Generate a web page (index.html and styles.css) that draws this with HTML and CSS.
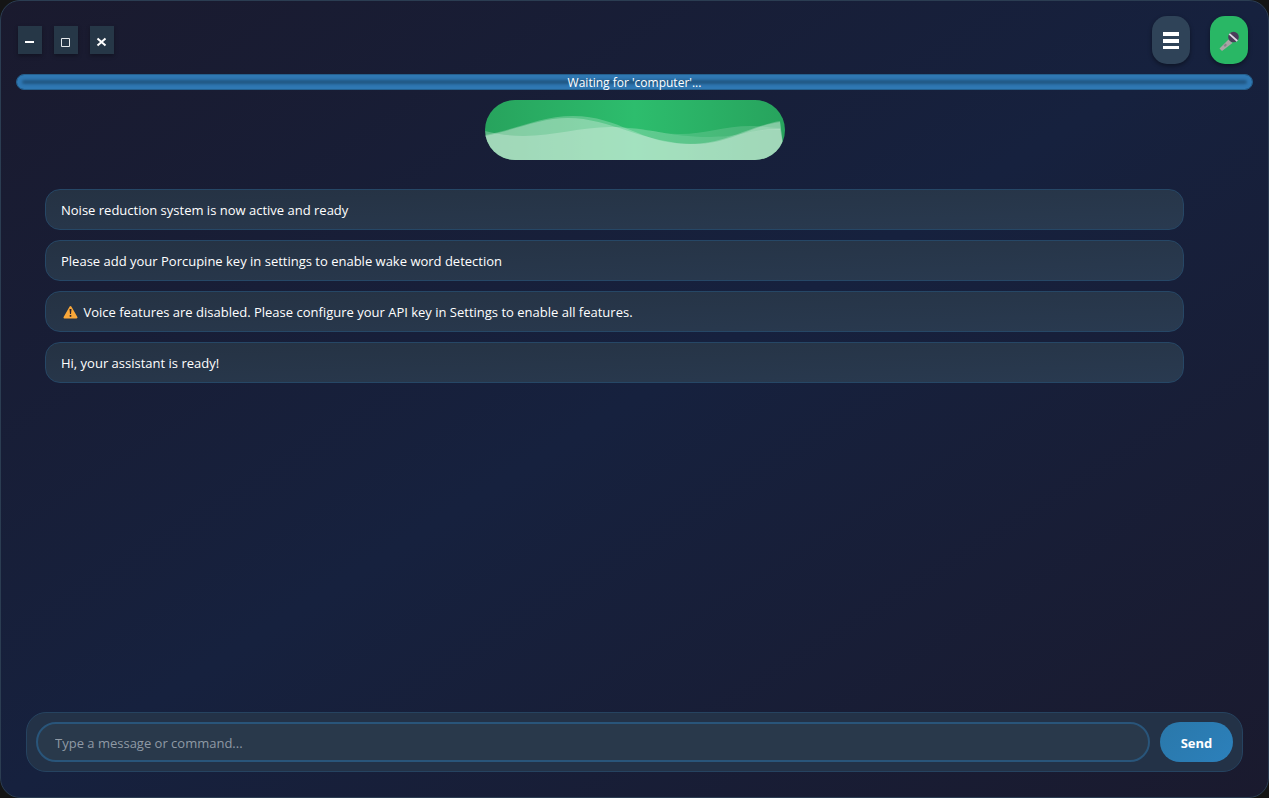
FILE: index.html
```html
<!DOCTYPE html>
<html lang="en">
<head>
<meta charset="utf-8">
<title>Voice Assistant</title>
<link rel="stylesheet" href="styles.css">
</head>
<body>
<div class="app">
  <header class="header">
    <div class="window-controls">
      <button class="window-button" type="button" aria-label="Minimize"><svg width="24" height="28" viewBox="0 0 24 28"><path d="M7 15h9v2H7z" fill="#fff"/></svg></button>
      <button class="window-button" type="button" aria-label="Maximize"><svg width="24" height="28" viewBox="0 0 24 28"><path d="M7.500 12.500h8v8h-8z" fill="none" stroke="#e4e8eb"/></svg></button>
      <button class="window-button" type="button" aria-label="Close"><svg width="24" height="28" viewBox="0 0 24 28"><path d="M7.500 12.500l8 7M15.500 12.500l-8 7" fill="none" stroke="#fff" stroke-width="2"/></svg></button>
    </div>
    <div class="actions">
      <button class="action menu" type="button" aria-label="Menu"><svg width="38" height="48" viewBox="0 0 38 48"><path d="M11 16h16v4H11zM11 23h16v4H11zM11 30h16v3H11z" fill="#fff"/></svg></button>
      <button class="action mic" type="button" aria-label="Microphone"><svg width="38" height="48" viewBox="0 0 38 48">
        <path d="M9.500 32.500l9-9 4 3.500-10.500 8z" fill="#a9a5a6"/>
        <path d="M13.500 29.500l2-2 1.500 1.500-2 2z" fill="#87838a"/>
        <circle cx="23.500" cy="21" r="5.300" fill="#4b3d5a"/>
        <path d="M19.300 17.800l8 7.200" stroke="#e0dae4" stroke-width="1.800"/>
      </svg></button>
    </div>
  </header>
  <div class="status" role="status">Waiting for 'computer'...</div>
  <div class="wave">
    <svg class="wave-art" viewBox="0 0 300 60" preserveAspectRatio="none" aria-hidden="true">
      <g fill="#fff">
        <path fill-opacity=".23" d="M0 35C30 30 55 16 88 16C135 16 155 44 205 44C240 44 265 26 295 21L298 45V60H0z"/>
        <path fill-opacity=".26" d="M0 36C30 30 55 18 83 18C125 18 160 44 210 44C245 44 265 26 295 22L298 45V60H0z"/>
        <path fill-opacity=".24" d="M0 31C50 44 85 27 125 27C160 27 185 37 225 37C255 37 270 28 295 29L298 45V60H0z"/>
        <path fill-opacity=".14" d="M130 27C155 27 170 34 195 34C220 34 240 26 265 26C280 26 285 28 295 28V30C270 28 255 37 225 37C185 37 160 27 130 27z"/>
      </g>
    </svg>
  </div>
  <main class="chat">
    <p class="message">Noise reduction system is now active and ready</p>
    <p class="message">Please add your Porcupine key in settings to enable wake word detection</p>
    <p class="message"><svg class="warning" width="19" height="14" viewBox="0 0 19 14" role="img" aria-label="Warning"><path d="M9.500 2l6 10.500h-12z" fill="#f9a83a" stroke="#f9a83a" stroke-width="2" stroke-linejoin="round"/><path d="M8.500 4h2l-.5 5h-1zM8.700 10h1.600v1.700H8.700z" fill="#2b2430"/></svg> Voice features are disabled. Please configure your API key in Settings to enable all features.</p>
    <p class="message">Hi, your assistant is ready!</p>
  </main>
  <form class="composer">
    <input class="entry" type="text" aria-label="Message" placeholder="Type a message or command...">
    <button class="send" type="button">Send</button>
  </form>
</div>
</body>
</html>
```
FILE: styles.css
```css
* { box-sizing: border-box; }
body { margin: 0; background: #151515; color: #fff; font-family: "Open Sans", "Noto Sans", sans-serif; font-size: 13px; }
button, input { font: inherit; color: inherit; }
button { border: 0; padding: 0; cursor: pointer; }
svg { display: block; }
.app {
  min-height: 100vh; padding: 15px; display: flex; flex-direction: column;
  border: 1px solid #2b3d52; border-radius: 20px;
  background: linear-gradient(to bottom right, #1a1a2e 0%, #16213e 50%, #1a1a2e 100%);
}
.header { display: flex; justify-content: space-between; align-items: center; }
.window-controls { display: flex; gap: 12px; padding-left: 2px; }
.window-button { background: #263747; box-shadow: 0 2px 4px rgba(0, 0, 0, .3); }
.actions { display: flex; gap: 20px; padding-right: 5px; }
.action { border-radius: 15px; box-shadow: 0 2px 4px rgba(0, 0, 0, .4); }
.menu { background: #2f4358; }
.mic { background: #29b765; }
.status {
  margin-top: 10px; height: 16px; border-radius: 8px; text-align: center;
  border: 1px solid #25608e;
  font-size: 12px; line-height: 15px;
  background: #205580; box-shadow: inset 0 0 3px 5px #2f78b3;
}
.wave {
  width: 300px; height: 60px; margin: 10px auto 0; border-radius: 30px; overflow: hidden;
  background: linear-gradient(90deg, #27a35d 0%, #2dbd6d 50%, #27a35d 100%);
}
.wave-art { width: 100%; height: 100%; }
.chat { flex: 1; display: flex; flex-direction: column; gap: 10px; padding: 29px 69px 20px 29px; }
.message {
  margin: 0; padding: 11px 15px 9px; line-height: 19px;
  border: 1px solid #264766; border-radius: 15px;
  background: linear-gradient(to bottom right, #253243, #293a50);
}
.warning { display: inline-block; vertical-align: -2px; }
.composer {
  display: flex; gap: 10px; margin: 0 10px 10px; padding: 9px;
  border: 1px solid #264360; border-radius: 20px; background: #233247;
}
.entry {
  flex: 1; min-width: 0; height: 40px; padding: 2px 17px 0;
  border: 2px solid #29557a; border-radius: 20px; background: #29394b; outline: 0;
}
.entry::placeholder { color: #8f99a5; opacity: 1; }
.send { width: 73px; padding-top: 2px; border-radius: 20px; background: linear-gradient(135deg, #2a78aa, #2c80bb); font-weight: 700; }
```
